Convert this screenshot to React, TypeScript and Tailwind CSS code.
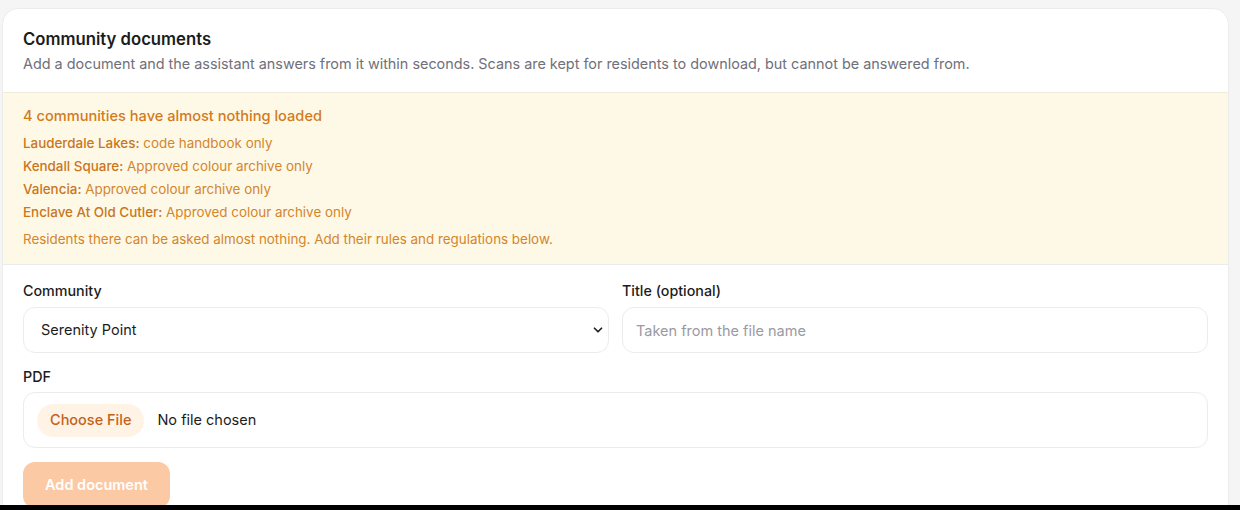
import { ChevronDown } from 'lucide-react';

const thin = [
  { name: 'Lauderdale Lakes', note: 'code handbook only' },
  { name: 'Kendall Square', note: 'Approved colour archive only' },
  { name: 'Valencia', note: 'Approved colour archive only' },
  { name: 'Enclave At Old Cutler', note: 'Approved colour archive only' },
];

export default function App() {
  return (
    <div
      className="min-h-[510px] bg-[#f5f5f5] pt-2 pl-[2px] pr-[11px] overflow-hidden"
      style={{ fontFamily: 'Inter, "Noto Sans", sans-serif' }}
    >
      <div className="bg-white border border-[#ececec] rounded-2xl overflow-hidden">
        {/* header */}
        <div className="px-5 pt-[18px] pb-[18px] border-b border-[#f0ece0]">
          <h2 className="text-[16.7px] leading-6 font-semibold text-[#1c1c1c]">Community documents</h2>
          <p className="mt-[3px] text-[14.4px] leading-5 text-[#70707a]">
            Add a document and the assistant answers from it within seconds. Scans are kept for residents to download, but cannot be answered from.
          </p>
        </div>

        {/* warning */}
        <div className="bg-[#fef9e7] px-5 pt-[11px] pb-[13px] border-b border-[#ececec]">
          <div className="text-[14.6px] leading-6 font-medium text-[#d37a1c]">4 communities have almost nothing loaded</div>
          <ul className="mt-[4px] flex flex-col text-[13.4px] leading-[23px] text-[#d3852c]">
            {thin.map((c) => (
              <li key={c.name}>
                <span className="font-medium text-[#c9761c]">{c.name}:</span> {c.note}
              </li>
            ))}
          </ul>
          <p className="mt-[4px] text-[13.4px] leading-[23px] text-[#d3852c]">
            Residents there can be asked almost nothing. Add their rules and regulations below.
          </p>
        </div>

        {/* form */}
        <div className="px-5 pt-[16px] pb-6 flex flex-col">
          <div className="grid grid-cols-2 gap-[13px]">
            <label className="flex flex-col gap-[6px]">
              <span className="text-[14.3px] leading-5 font-medium text-[#1c1c1c]">Community</span>
              <div className="relative">
                <select className="w-full h-[46px] appearance-none rounded-xl border border-[#ececec] bg-white pl-[17px] pr-10 text-[14.5px] text-[#1c1c1c] outline-none">
                  <option>Serenity Point</option>
                </select>
                <ChevronDown className="pointer-events-none absolute right-[4px] top-1/2 -translate-y-1/2 w-3.5 h-3.5 text-[#222]" strokeWidth={3} />
              </div>
            </label>
            <label className="flex flex-col gap-[6px]">
              <span className="text-[14.3px] leading-5 font-medium text-[#1c1c1c]">Title (optional)</span>
              <input
                placeholder="Taken from the file name"
                className="w-full h-[46px] rounded-xl border border-[#ececec] bg-white px-[13px] text-[14.5px] text-[#1c1c1c] placeholder:text-[#9a9aa2] outline-none"
              />
            </label>
          </div>

          <div className="mt-[14px] flex flex-col gap-[5px]">
            <span className="text-[14.3px] leading-5 font-medium text-[#1c1c1c]">PDF</span>
            <div className="h-[56px] rounded-xl border border-[#ececec] bg-white px-[13px] flex items-center gap-[13px]">
              <span className="rounded-full bg-[#fff3e6] px-[13px] h-[33px] flex items-center text-[14.5px] font-medium text-[#c2621a]">
                Choose File
              </span>
              <span className="text-[14.5px] text-[#1c1c1c]">No file chosen</span>
            </div>
          </div>

          <div className="mt-[14px]">
            <button
              disabled
              className="h-[46px] px-[22px] rounded-xl bg-[#fcc9a5] text-[14.5px] font-semibold text-white"
            >
              Add document
            </button>
          </div>
        </div>
      </div>
      <div className="fixed left-0 right-0 bottom-0 h-[5px] bg-black" />
    </div>
  );
}
